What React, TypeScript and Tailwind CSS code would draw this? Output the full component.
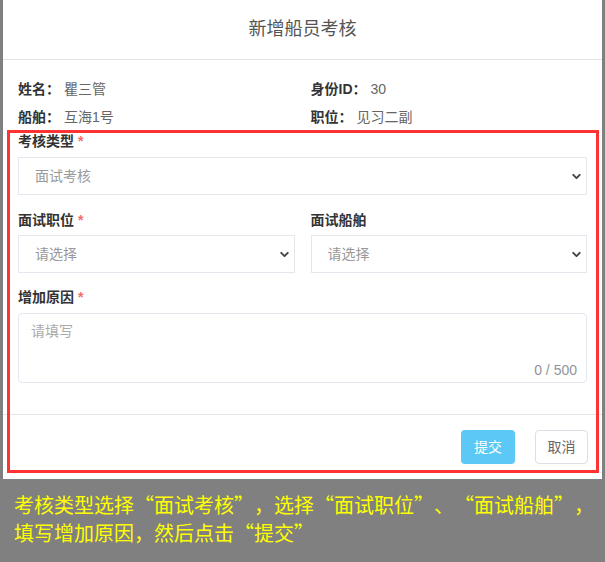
import { ChevronDown } from 'lucide-react';

function Required() {
  return <span className="ml-1 text-[#f56c6c]">*</span>;
}

function FieldLabel({ text, required }: { text: string; required?: boolean }) {
  return (
    <div className="h-[20px] leading-[20px] text-[14px] font-bold text-[#333]">
      {text}
      {required && <Required />}
    </div>
  );
}

function FakeSelect({ value, className }: { value: string; className?: string }) {
  return (
    <div
      className={`flex h-[38px] items-center justify-between border border-[#e4e7ed] bg-white pl-[16px] pr-[3px] text-[14px] text-[#999] ${className ?? ''}`}
    >
      <span>{value}</span>
      <ChevronDown size={13} strokeWidth={3.5} className="text-[#444]" />
    </div>
  );
}

export default function App() {
  const info = [
    { label: '姓名：', value: '瞿三管' },
    { label: '身份ID：', value: '30' },
    { label: '船舶：', value: '互海1号' },
    { label: '职位：', value: '见习二副' },
  ];

  return (
    <div className="relative h-[562px] w-[605px] overflow-hidden bg-[#808080] font-['Liberation_Sans','Noto_Sans_CJK_SC',sans-serif]">
      {/* modal */}
      <div className="ml-[3px] w-[599px] bg-white">
        <div className="flex h-[60px] items-center justify-center border-b border-[#e5e5e5] text-[18px] text-[#555]">
          新增船员考核
        </div>

        <div className="px-[15px] pt-[15px] pb-[31px]">
          <div className="grid grid-cols-2 gap-x-4">
            {info.map((item) => (
              <div key={item.label} className="flex h-[28px] items-center text-[14px]">
                <span className="font-bold text-[#333]">{item.label}</span>
                <span className="ml-1 text-[#666]">{item.value}</span>
              </div>
            ))}
          </div>

          <div>
            <FieldLabel text="考核类型" required />
            <FakeSelect value="面试考核" className="mt-[6px]" />
          </div>

          <div className="mt-[15px] grid grid-cols-2 gap-x-4">
            <div>
              <FieldLabel text="面试职位" required />
              <FakeSelect value="请选择" className="mt-[5px]" />
            </div>
            <div>
              <FieldLabel text="面试船舶" />
              <FakeSelect value="请选择" className="mt-[5px]" />
            </div>
          </div>

          <div className="mt-[14px]">
            <FieldLabel text="增加原因" required />
            <div className="relative mt-[6px] h-[70px] rounded-[4px] border border-[#e4e7ed] bg-white">
              <div className="pl-[12px] pt-[7px] text-[14px] text-[#aaa]">请填写</div>
              <div className="absolute right-[9px] bottom-[1px] text-[14px] text-[#909399]">0 / 500</div>
            </div>
          </div>
        </div>

        <div className="flex justify-end gap-[20px] border-t border-[#e5e5e5] pt-[15px] pr-[14px] pb-[15px]">
          <button className="h-[34px] w-[54px] rounded-[4px] bg-[#5cc8f6] text-[14px] text-white">提交</button>
          <button className="h-[34px] w-[53px] rounded-[4px] border border-[#dcdfe6] bg-white text-[14px] text-[#666]">
            取消
          </button>
        </div>
      </div>

      {/* annotation box */}
      <div className="pointer-events-none absolute left-[7px] top-[130px] h-[343px] w-[592px] border-[3px] border-[#ff3333]" />

      <div className="pl-[14px] pt-[12px] text-[20px] leading-[28px] whitespace-nowrap text-[#ffff00] font-['Noto_Sans_CJK_SC',sans-serif] [text-spacing-trim:space-all]">
        考核类型选择“面试考核”，选择“面试职位”、“面试船舶”，
        <br />
        填写增加原因，然后点击“提交”
      </div>
    </div>
  );
}
